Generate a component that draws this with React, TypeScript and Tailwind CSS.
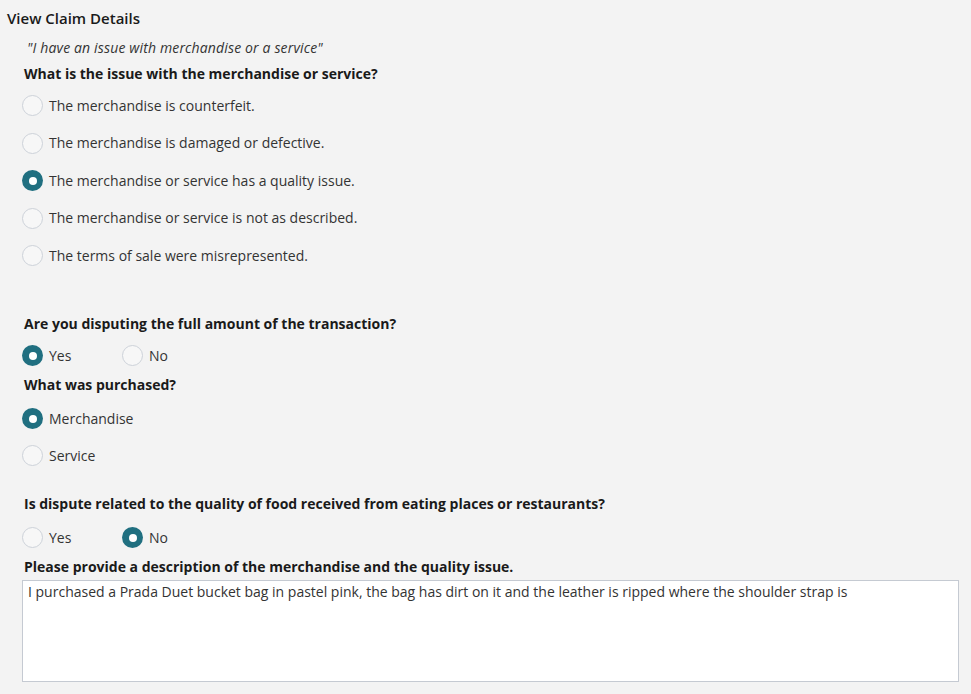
import React from 'react'

function Radio({ checked, label }: { checked?: boolean; label: string }) {
  return (
    <div className="flex items-center gap-[6px]">
      <span
        className={
          checked
            ? 'w-[21px] h-[21px] rounded-full bg-[#206f80] flex items-center justify-center shrink-0'
            : 'w-[21px] h-[21px] rounded-full bg-[#f7f7f7] border border-[#cdd2d9] shrink-0'
        }
      >
        {checked && <span className="w-[8px] h-[8px] rounded-full bg-white" />}
      </span>
      <span className="text-[14px] text-[#333] leading-none">{label}</span>
    </div>
  )
}

export default function App() {
  const issues = [
    'The merchandise is counterfeit.',
    'The merchandise is damaged or defective.',
    'The merchandise or service has a quality issue.',
    'The merchandise or service is not as described.',
    'The terms of sale were misrepresented.',
  ]

  return (
    <div
      className="w-[971px] h-[694px] bg-[#f3f3f3] text-[#222] overflow-hidden"
      style={{ fontFamily: '"Open Sans", "Noto Sans", sans-serif' }}
    >
      <div className="pl-[7px] pt-[8px] text-[15px] font-semibold text-[#1a1a1a] leading-[20px]">View Claim Details</div>

      <div className="pl-[22px] pr-[12px]">
        <div className="pl-[5px] mt-[10px] text-[14px] italic tracking-[0.15px] text-[#333] leading-[20px]">
          "I have an issue with merchandise or a service"
        </div>
        <div className="pl-[2px] mt-[6px] text-[14px] font-bold text-[#1a1a1a] leading-[20px]">
          What is the issue with the merchandise or service?
        </div>

        <div className="mt-[11px] flex flex-col gap-[16.5px]">
          {issues.map((t, i) => (
            <Radio key={t} label={t} checked={i === 2} />
          ))}
        </div>

        <div className="pl-[2px] mt-[48px] text-[14px] font-bold text-[#1a1a1a] leading-[20px]">
          Are you disputing the full amount of the transaction?
        </div>
        <div className="mt-[11px] flex">
          <div className="w-[100px]"><Radio label="Yes" checked /></div>
          <Radio label="No" />
        </div>

        <div className="pl-[2px] mt-[9px] text-[14px] font-bold text-[#1a1a1a] leading-[20px]">
          What was purchased?
        </div>
        <div className="mt-[13px] flex flex-col gap-[16px]">
          <Radio label="Merchandise" checked />
          <Radio label="Service" />
        </div>

        <div className="pl-[2px] mt-[28px] text-[14px] font-bold text-[#1a1a1a] leading-[20px]">
          Is dispute related to the quality of food received from eating places or restaurants?
        </div>
        <div className="mt-[13px] flex">
          <div className="w-[100px]"><Radio label="Yes" /></div>
          <Radio label="No" checked />
        </div>

        <div className="pl-[2px] mt-[9px] text-[14px] font-bold text-[#1a1a1a] leading-[20px]">
          Please provide a description of the merchandise and the quality issue.
        </div>
        <div className="mt-[3px] w-[937px] h-[102px] bg-white border border-[#c5cad2] px-[5px] py-[1px] text-[14px] text-[#333] leading-[20px]">
          I purchased a Prada Duet bucket bag in pastel pink, the bag has dirt on it and the leather is ripped where the shoulder strap is
        </div>
      </div>
    </div>
  )
}
